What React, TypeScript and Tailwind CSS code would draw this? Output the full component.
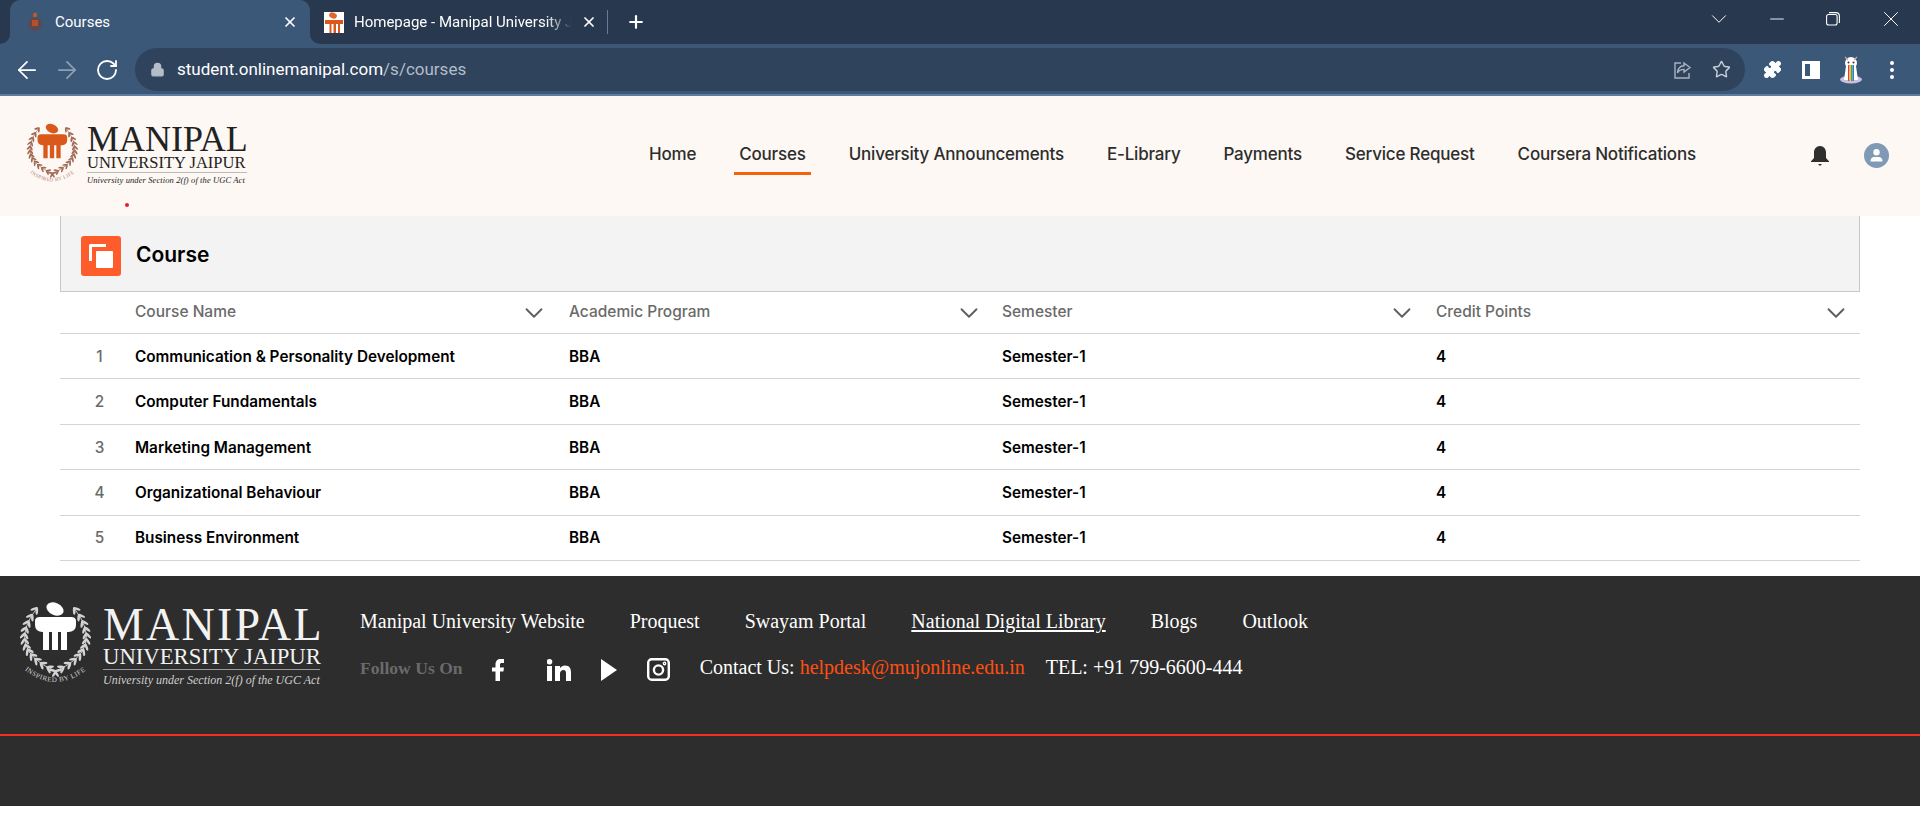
import React from "react";
import { ArrowLeft, ArrowRight, RotateCw, X, Plus, Lock, Star, Puzzle, ChevronDown, Minus } from "lucide-react";

const Emblem = ({ mono }: { mono?: boolean }) => {
  const main = mono ? "#ffffff" : "#d9591c";
  const leaf = mono ? "#d2d2d2" : "#a26b55";
  const label = mono ? "#d2d2d2" : "#b5836e";
  const id = mono ? "arc-mono" : "arc-col";
  const steps = Array.from({ length: 13 }, (_, i) => i / 12);
  const Wreath = (
    <g fill={leaf}>
      <path d="M18 7 Q-14 48 36 70" fill="none" stroke={leaf} strokeWidth="0.9" />
      {steps.map((t) => {
        const x = (1 - t) * (1 - t) * 18 + 2 * t * (1 - t) * -14 + t * t * 36;
        const y = (1 - t) * (1 - t) * 7 + 2 * t * (1 - t) * 48 + t * t * 70;
        const dx = 2 * (1 - t) * -32 + 2 * t * 50;
        const dy = 2 * (1 - t) * 41 + 2 * t * 22;
        const a = (Math.atan2(dy, dx) * 180) / Math.PI;
        return (
          <g key={t}>
            <ellipse cx={x} cy={y} rx="3.800" ry="1.300" transform={`rotate(${a - 35} ${x} ${y}) translate(3 0)`} />
            <ellipse cx={x} cy={y} rx="3.800" ry="1.300" transform={`rotate(${a + 35} ${x} ${y}) translate(3 0)`} />
          </g>
        );
      })}
    </g>
  );
  return (
    <svg viewBox="0 0 72 85" className="w-full h-full">
      <ellipse cx="36" cy="8" rx="9" ry="6" transform="rotate(25 36 8)" fill={main} />
      <path d="M16 20Q16 16 21 16H52Q57 16 57 20V24Q57 30 50 31H48V49H42V31H39V49H33V31H30V49H24V31H23Q16 30 16 24Z" fill={main} />
      {Wreath}
      <g transform="translate(73 0) scale(-1 1)">{Wreath}</g>
      <path id={id} d="M2 66 Q36 96 71 66" fill="none" />
      <text fontSize="7" fill={label} fontFamily="'Liberation Serif', serif" letterSpacing="0.500">
        <textPath href={`#${id}`} startOffset="6%">INSPIRED BY LIFE</textPath>
      </text>
    </svg>
  );
};

const Foot = ({ side }: { side: "l" | "r" }) => (
  <div className={`absolute bottom-0 w-[10px] h-[10px] bg-[#3b5878] ${side === "l" ? "left-[-10px]" : "right-[-10px]"}`}>
    <div className={`w-full h-full bg-[#27384f] ${side === "l" ? "rounded-br-[10px]" : "rounded-bl-[10px]"}`} />
  </div>
);

const TitleBar = () => (
  <div className="h-[44px] bg-[#27384f] flex items-stretch pl-[10px]">
    <div className="w-[300px] bg-[#3b5878] rounded-t-[10px] pl-[16px] pr-[12px] flex items-center relative">
      <Foot side="l" />
      <Foot side="r" />
      <svg width="18" height="20" viewBox="0 0 18 20" className="shrink-0">
        <ellipse cx="9" cy="3" rx="2" ry="2.500" fill="#c8562a" />
        <circle cx="9" cy="12" r="7" fill="#5b4a52" />
        <rect x="6" y="8" width="6" height="6" fill="#b84f26" />
      </svg>
      <span className="ml-[11px] text-[15px] text-white flex-1 font-['Roboto',sans-serif]">Courses</span>
      <X size={16} strokeWidth={2.6} className="text-white shrink-0" />
    </div>
    <div className="w-[296px] pl-[14px] pr-[9px] flex items-center">
      <svg width="20" height="21" viewBox="0 0 20 21" className="shrink-0 bg-white">
        <ellipse cx="9" cy="3.500" rx="4" ry="3" transform="rotate(20 9 3.500)" fill="#e0662a" />
        <path d="M1 8h18v4h-3v9h-2v-9h-2v9H9.500v-9H7.500v9H5.500v-9H1z" fill="#d9591c" />
      </svg>
      <span className="ml-[10px] w-[218px] text-[15px] text-white whitespace-nowrap overflow-hidden font-['Roboto',sans-serif] [mask-image:linear-gradient(to_right,black_88%,transparent)]">Homepage - Manipal University Jaipur</span>
      <X size={16} strokeWidth={2.6} className="text-white shrink-0 ml-auto" />
    </div>
    <div className="w-px h-[24px] bg-[#6b7b8f] self-center ml-[1px]" />
    <Plus size={20} strokeWidth={2.6} className="text-white self-center ml-[18px]" />
    <div className="ml-auto h-[38px] flex items-center">
      <ChevronDown size={26} strokeWidth={0.9} className="text-white" />
      <Minus size={22} strokeWidth={1} className="text-white ml-[34px]" />
      <svg width="14" height="14" viewBox="0 0 14 14" fill="none" stroke="white" strokeWidth="1.100" className="ml-[38px]">
        <rect x="0.600" y="2.500" width="10.500" height="10.500" rx="2" />
        <path d="M3 .6h7a3.500 3.500 0 0 1 3.400 3.400v7" />
      </svg>
      <X size={26} strokeWidth={0.9} className="text-white ml-[38px] mr-[16px]" />
    </div>
  </div>
);

const Toolbar = () => (
  <div className="h-[52px] bg-[#3b5878] flex items-center pl-[13px] pt-[1px] border-b-[2px] border-b-[#5f7da0]">
    <ArrowLeft size={28} strokeWidth={1.500} className="text-white" />
    <ArrowRight size={28} strokeWidth={1.500} className="text-[#8ea0b5] ml-[12px]" />
    <RotateCw size={24} strokeWidth={1.800} className="text-white ml-[14px]" />
    <div className="ml-[16px] w-[1610px] h-[43px] rounded-full bg-[#2f435c] flex items-center pl-[15px] pr-[14px]">
      <Lock size={15} fill="#b4bdc8" strokeWidth={2} className="text-[#b4bdc8]" />
      <span className="ml-[12px] text-[17px] text-white font-['Roboto',sans-serif]">student.onlinemanipal.com<span className="text-[#b4bdc8]">/s/courses</span></span>
      <div className="ml-auto flex items-center gap-[19px]">
        <svg width="20" height="20" viewBox="0 0 20 20" fill="none" stroke="#a9b3bf" strokeWidth="1.400">
          <path d="M8 3H2v15h14v-5" />
          <path d="M11 3l6 4.500-6 4.500V9.400C8 9.400 5.800 10.600 4.500 13c.3-4 2.700-7 6.500-7.200z" />
        </svg>
        <Star size={19} strokeWidth={1.800} className="text-[#c8ced6]" />
      </div>
    </div>
    <Puzzle size={19} fill="white" strokeWidth={1.500} className="text-white ml-[18px]" />
    <div className="ml-[20px] w-[18px] h-[18px] border-[3px] border-white flex justify-end"><div className="w-[7px] h-full bg-white" /></div>
    <svg width="24" height="28" viewBox="0 0 24 28" className="ml-[19px]">
      <ellipse cx="12" cy="23.500" rx="11" ry="4" fill="#c8c0de" />
      <circle cx="12" cy="7" r="6" fill="#ffffff" />
      <path d="M7 10h10l2 14H5z" fill="#ffffff" />
      <path d="M6 1l3 3M18 1l-3 3" stroke="#e0a0a0" strokeWidth="1.200" />
      <rect x="9" y="9" width="1.500" height="16" fill="#e33b3b" />
      <rect x="10.500" y="9" width="1.500" height="16" fill="#f3c12e" />
      <rect x="12" y="9" width="1.500" height="16" fill="#2eb05a" />
      <rect x="13.500" y="9" width="1.500" height="16" fill="#3a76d8" />
      <circle cx="9.500" cy="6.500" r="1" fill="#333" />
      <circle cx="14.500" cy="6.500" r="1" fill="#333" />
    </svg>
    <div className="flex flex-col gap-[3px] ml-[27px]">
      <div className="w-[4px] h-[4px] rounded-full bg-white" />
      <div className="w-[4px] h-[4px] rounded-full bg-white" />
      <div className="w-[4px] h-[4px] rounded-full bg-white" />
    </div>
  </div>
);

const LogoLight = () => (
  <div className="flex items-start">
    <div className="w-[52px] h-[63px] shrink-0"><Emblem /></div>
    <div className="ml-[9px] mt-[2px] w-[160px] flex flex-col font-['Liberation_Serif',serif] text-[#222]">
      <div className="whitespace-nowrap text-[36px] leading-[30px]">MANIPAL</div>
      <div className="whitespace-nowrap border-b border-[#bbb] text-[16.500px] leading-[18px]">UNIVERSITY JAIPUR</div>
      <div className="italic whitespace-nowrap text-[8.500px] leading-[14px] tracking-[0.100px]">University under Section 2(f) of the UGC Act</div>
    </div>
  </div>
);

const LogoDark = () => (
  <div className="flex items-start shrink-0">
    <div className="w-[72px] h-[85px] shrink-0"><Emblem mono /></div>
    <div className="ml-[12px] mt-[4px] w-[217px] flex flex-col font-['Liberation_Serif',serif] text-[#f2f2f2]">
      <div className="whitespace-nowrap text-[46px] leading-[40px] tracking-[2.200px]">MANIPAL</div>
      <div className="whitespace-nowrap border-b border-[#9a9a9a] text-[22.700px] leading-[24px]">UNIVERSITY JAIPUR</div>
      <div className="italic whitespace-nowrap text-[12px] leading-[20px] text-[#cfcfcf]">University under Section 2(f) of the UGC Act</div>
    </div>
  </div>
);

const nav = ["Home", "Courses", "University Announcements", "E-Library", "Payments", "Service Request", "Coursera Notifications"];

const Header = () => (
  <div className="h-[120px] bg-[#fdf8f4] flex items-start pl-[26px] pr-[31px] relative">
    <div className="mt-[26px] w-[618px] shrink-0"><LogoLight /></div>
    <div className="flex gap-[33px] mt-[42px] font-['Inter',sans-serif] text-[17px] font-medium text-[#2d2d2d] tracking-[-0.200px]">
      {nav.map((n) => (
        <div key={n} className={`h-[37px] px-[5px] leading-[32px] whitespace-nowrap ${n === "Courses" ? "border-b-[3px] border-[#f4610f]" : ""}`}>{n}</div>
      ))}
    </div>
    <div className="ml-auto mt-[47px] flex items-center">
      <svg width="22" height="22" viewBox="0 0 22 22" fill="#2f2f2f">
        <path d="M11 1c-3.800 0-6 3-6 6.500V13l-3 3.200V17h18v-.8L17 13V7.500C17 4 14.800 1 11 1z" />
        <path d="M9 19h4l-2 2z" />
      </svg>
      <div className="ml-[33px] w-[25px] h-[25px] rounded-full bg-[#7e9ab4] flex items-center justify-center">
        <svg width="15" height="15" viewBox="0 0 15 15" fill="white">
          <circle cx="7.500" cy="4.200" r="3.200" />
          <path d="M1.500 13c0-2.600 2-4 3.500-4h5c1.500 0 3.500 1.400 3.500 4v.5h-12z" />
        </svg>
      </div>
    </div>
    <div className="absolute left-[125px] top-[107px] w-[4px] h-[4px] rounded-full bg-[#ee1c25]" />
  </div>
);

const rows = ["Communication & Personality Development", "Computer Fundamentals", "Marketing Management", "Organizational Behaviour", "Business Environment"];
const cols = [
  { label: "Course Name", pad: "pr-[20px]" },
  { label: "Academic Program", pad: "pr-[18px]" },
  { label: "Semester", pad: "pr-[19px]" },
  { label: "Credit Points", pad: "pr-[9px]" },
];

const Table = () => (
  <div className="mx-[60px] font-['Inter',sans-serif]">
    <div className="h-[76px] bg-[#f3f3f3] border border-t-0 border-[#c9c9c9] flex items-center pl-[20px]">
      <div className="w-[40px] h-[40px] mt-[4px] bg-[#ff5c2b] rounded-[3px] relative">
        <div className="absolute left-[8px] top-[8px] w-[17px] h-[17px] border-l-[3px] border-t-[3px] border-white rounded-tl-[2px]" />
        <div className="absolute left-[15px] top-[15px] w-[17px] h-[17px] bg-white rounded-[1px]" />
      </div>
      <div className="ml-[15px] text-[21px] font-semibold text-black pt-[2px]">Course</div>
    </div>
    <div className="h-[42px] border-b border-[#d4d4d4] grid grid-cols-[75px_434px_433px_434px_424px] items-center text-[15.500px] font-medium text-[#6a6a6a]">
      <div />
      {cols.map((c) => (
        <div key={c.label} className={`flex items-center justify-between ${c.pad}`}>
          <span className="mb-[2px]">{c.label}</span>
          <ChevronDown size={30} strokeWidth={1.500} className="text-[#5f5f5f]" />
        </div>
      ))}
    </div>
    {rows.map((r, i) => (
      <div key={r} className="h-[45.400px] pt-[2px] border-b border-[#d4d4d4] grid grid-cols-[75px_434px_433px_434px_424px] items-center text-[15.300px] font-semibold text-black">
        <div className="text-center pl-[4px] font-medium text-[#6a6a6a]">{i + 1}</div>
        <div>{r}</div>
        <div>BBA</div>
        <div>Semester-1</div>
        <div>4</div>
      </div>
    ))}
  </div>
);

const links = ["Manipal University Website", "Proquest", "Swayam Portal", "National Digital Library", "Blogs", "Outlook"];

const Footer = () => (
  <div className="mt-[15px] h-[230px] bg-[#2d2d2d] font-['Liberation_Serif',serif]">
    <div className="h-[160px] border-b-2 border-[#f03020] flex items-start pl-[19px] pt-[25px]">
      <LogoDark />
      <div className="ml-[40px] pt-[8px]">
        <div className="flex gap-[45px] text-[20px] text-white leading-[24px]">
          {links.map((l) => (
            <span key={l} className={`whitespace-nowrap ${l === "National Digital Library" ? "underline underline-offset-2" : ""}`}>{l}</span>
          ))}
        </div>
        <div className="flex items-center mt-[22px] h-[24px]">
          <span className="text-[17.600px] font-bold text-[#6a6a6a] whitespace-nowrap mt-[2px]">Follow Us On</span>
          <svg width="12" height="22" viewBox="0 0 12 22" fill="white" className="ml-[29px] mt-[6px]"><path d="M3.500 22V12.500H0V8.500h3.500V5.500C3.500 2 5.500 0 8.500 0H12v4h-2c-1.500 0-2 .6-2 2v2.500h4l-.6 4H8V22z" /></svg>
          <svg width="24" height="22" viewBox="0 0 24 22" fill="white" className="ml-[43px] mt-[6px]"><rect x="0" y="7" width="5" height="15" /><circle cx="2.500" cy="2.800" r="2.800" /><path d="M8 7h5v2.200C14 7.500 16 6.600 18 6.600c4.500 0 6 2.800 6 7V22h-5v-7.500c0-2-.5-3.500-2.500-3.500S13 12.500 13 14.500V22H8z" /></svg>
          <svg width="16" height="22" viewBox="0 0 16 22" fill="white" className="ml-[30px] mt-[6px]"><path d="M0 0l16 11L0 22z" /></svg>
          <svg width="23" height="23" viewBox="0 0 23 23" fill="none" stroke="white" strokeWidth="2.400" className="ml-[30px] mt-[6px]"><rect x="1.200" y="1.200" width="20.600" height="20.600" rx="3.500" /><circle cx="11.500" cy="12" r="4.600" /><circle cx="17.500" cy="5.500" r="0.700" /></svg>
          <span className="ml-[30px] text-[20px] text-white whitespace-nowrap">Contact Us: <span className="text-[#ff4f12]">helpdesk@mujonline.edu.in</span></span>
          <span className="ml-[21px] text-[20px] text-white whitespace-nowrap">TEL: +91 799-6600-444</span>
        </div>
      </div>
    </div>
  </div>
);

export default function App() {
  return (
    <div className="w-[1920px] h-[838px] overflow-hidden bg-white">
      <TitleBar />
      <Toolbar />
      <Header />
      <Table />
      <Footer />
    </div>
  );
}
